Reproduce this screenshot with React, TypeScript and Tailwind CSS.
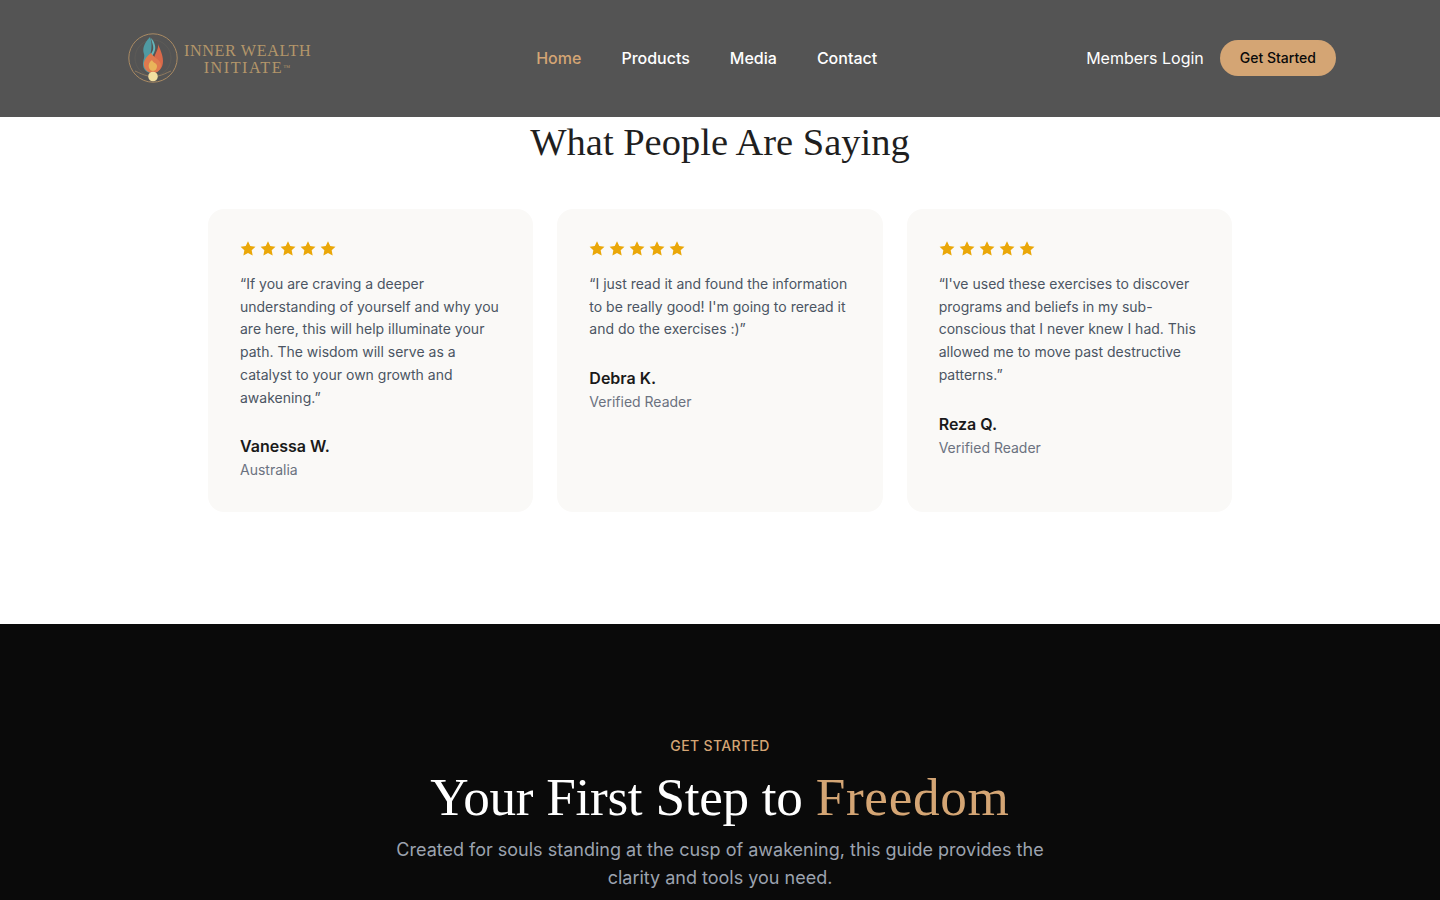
const serif = { fontFamily: '"Liberation Serif", serif' };

const reviews = [
  {
    quote:
      "“If you are craving a deeper understanding of yourself and why you are here, this will help illuminate your path. The wisdom will serve as a catalyst to your own growth and awakening.”",
    name: "Vanessa W.",
    place: "Australia",
  },
  {
    quote:
      "“I just read it and found the information to be really good! I'm going to reread it and do the exercises :)”",
    name: "Debra K.",
    place: "Verified Reader",
  },
  {
    quote:
      "“I've used these exercises to discover programs and beliefs in my sub-conscious that I never knew I had. This allowed me to move past destructive patterns.”",
    name: "Reza Q.",
    place: "Verified Reader",
  },
];

function Star() {
  return (
    <svg viewBox="0 0.5 24 24" className="h-4 w-4 fill-[#eaa708]">
      <path d="M12 1l3.4 7.1 7.8 1-5.7 5.4 1.5 7.7L12 18.4l-6.9 3.8 1.4-7.7L.9 9.1l7.7-1z" />
    </svg>
  );
}

function Logo() {
  return (
    <div className="flex items-center gap-[6px]">
      <svg viewBox="0 0 50 50" className="h-[50px] w-[50px]">
        <circle cx="25" cy="25" r="24.2" fill="none" stroke="#a98a63" strokeWidth="1" />
        <circle cx="25" cy="25" r="18" fill="none" stroke="#6b655c" strokeWidth="0.4" />
        <path d="M22 4c-6 6-8 12-6 17 1 3-1 6-1 10 0 5 3 8 7 9-1-6-3-9-1-14 2-6 4-15 1-22z" fill="#4f9aa3" />
        <path d="M23 5c1 5 3 8 2 12-1 3-4 6-5 9 4-2 6-5 7-9 1-4-1-9-4-12z" fill="#63b4b8" />
        <path d="M30 11c1 5-3 9-4 14-1 4-1 9 0 15 5-1 9-5 9-12 0-6-3-12-5-17z" fill="#d9694a" />
        <path d="M23 20c-5 4-8 8-7 13 1 4 4 7 9 7 5 0 8-4 8-8 0-5-7-7-10-12z" fill="#df7a4f" />
        <path d="M24 27c-3 2-4 5-3 8 1 2 2 3 4 3 3 0 4-3 4-5 0-3-4-3-5-6z" fill="#e9b45a" />
        <path d="M7 38c5 2 8 4 13 5M43 38c-5 2-8 4-13 5" fill="none" stroke="#a98a63" strokeWidth="0.7" />
        <circle cx="25" cy="43.5" r="4.8" fill="#f2dfa0" />
      </svg>
      <div
        style={serif}
        className="mt-1 flex flex-col items-center text-[16.2px] leading-[17px] tracking-[0.6px] text-[#b3966a]"
      >
        <span>INNER WEALTH</span>
        <span className="tracking-[1.5px]">
          INITIATE<sup className="text-[7px] leading-[0]">™</sup>
        </span>
      </div>
    </div>
  );
}

function Header() {
  return (
    <header className="flex h-[117px] items-center justify-between bg-[#545454] pb-px pl-[128px] pr-[104px]">
      <Logo />
      <nav className="ml-4 flex items-center gap-10 text-base font-medium text-white">
        <a className="text-[#d4a574]">Home</a>
        <a>Products</a>
        <a>Media</a>
        <a>Contact</a>
      </nav>
      <div className="flex items-center gap-4">
        <a className="text-base text-white">Members Login</a>
        <button className="h-9 rounded-full bg-[#d4a574] px-5 text-sm font-medium text-[#0a0a0a]">
          Get Started
        </button>
      </div>
    </header>
  );
}

export default function App() {
  return (
    <div
      style={{ fontFamily: 'Inter, "Liberation Sans", sans-serif' }}
      className="h-[900px] overflow-hidden bg-white"
    >
      <Header />
      <section className="h-[507px] pt-[5px]">
        <h2
          style={serif}
          className="text-center text-[38.5px] leading-10 text-[#1f1f1f]"
        >
          What People Are Saying
        </h2>
        <div className="mx-auto mt-[46.8px] grid w-[1024px] grid-cols-3 gap-6">
          {reviews.map((r) => (
            <div key={r.name} className="rounded-2xl bg-[#faf9f7] p-8">
              <div className="mb-4 flex gap-1">
                <Star />
                <Star />
                <Star />
                <Star />
                <Star />
              </div>
              <p className="text-sm leading-[22.75px] text-[#4b5563]">{r.quote}</p>
              <div className="mt-[25px] text-base font-semibold text-[#1a1a1a]">{r.name}</div>
              <div className="mt-0.5 text-sm text-[#6b7280]">{r.place}</div>
            </div>
          ))}
        </div>
      </section>
      <section className="bg-[#0a0a0a] pb-28 pt-28 text-center">
        <div className="text-sm font-medium tracking-[0.35px] text-[#d4a574]">GET STARTED</div>
        <h2 style={serif} className="mt-3 text-[53.2px] leading-[60px] tracking-[-0.28px] text-white">
          Your First Step to <span className="tracking-[0.7px] text-[#d4a574]">Freedom</span>
        </h2>
        <p className="mx-auto mt-2 w-[672px] text-lg leading-7 text-[#9ca3af]">
          Created for souls standing at the cusp of awakening, this guide provides the clarity and
          tools you need.
        </p>
      </section>
    </div>
  );
}
